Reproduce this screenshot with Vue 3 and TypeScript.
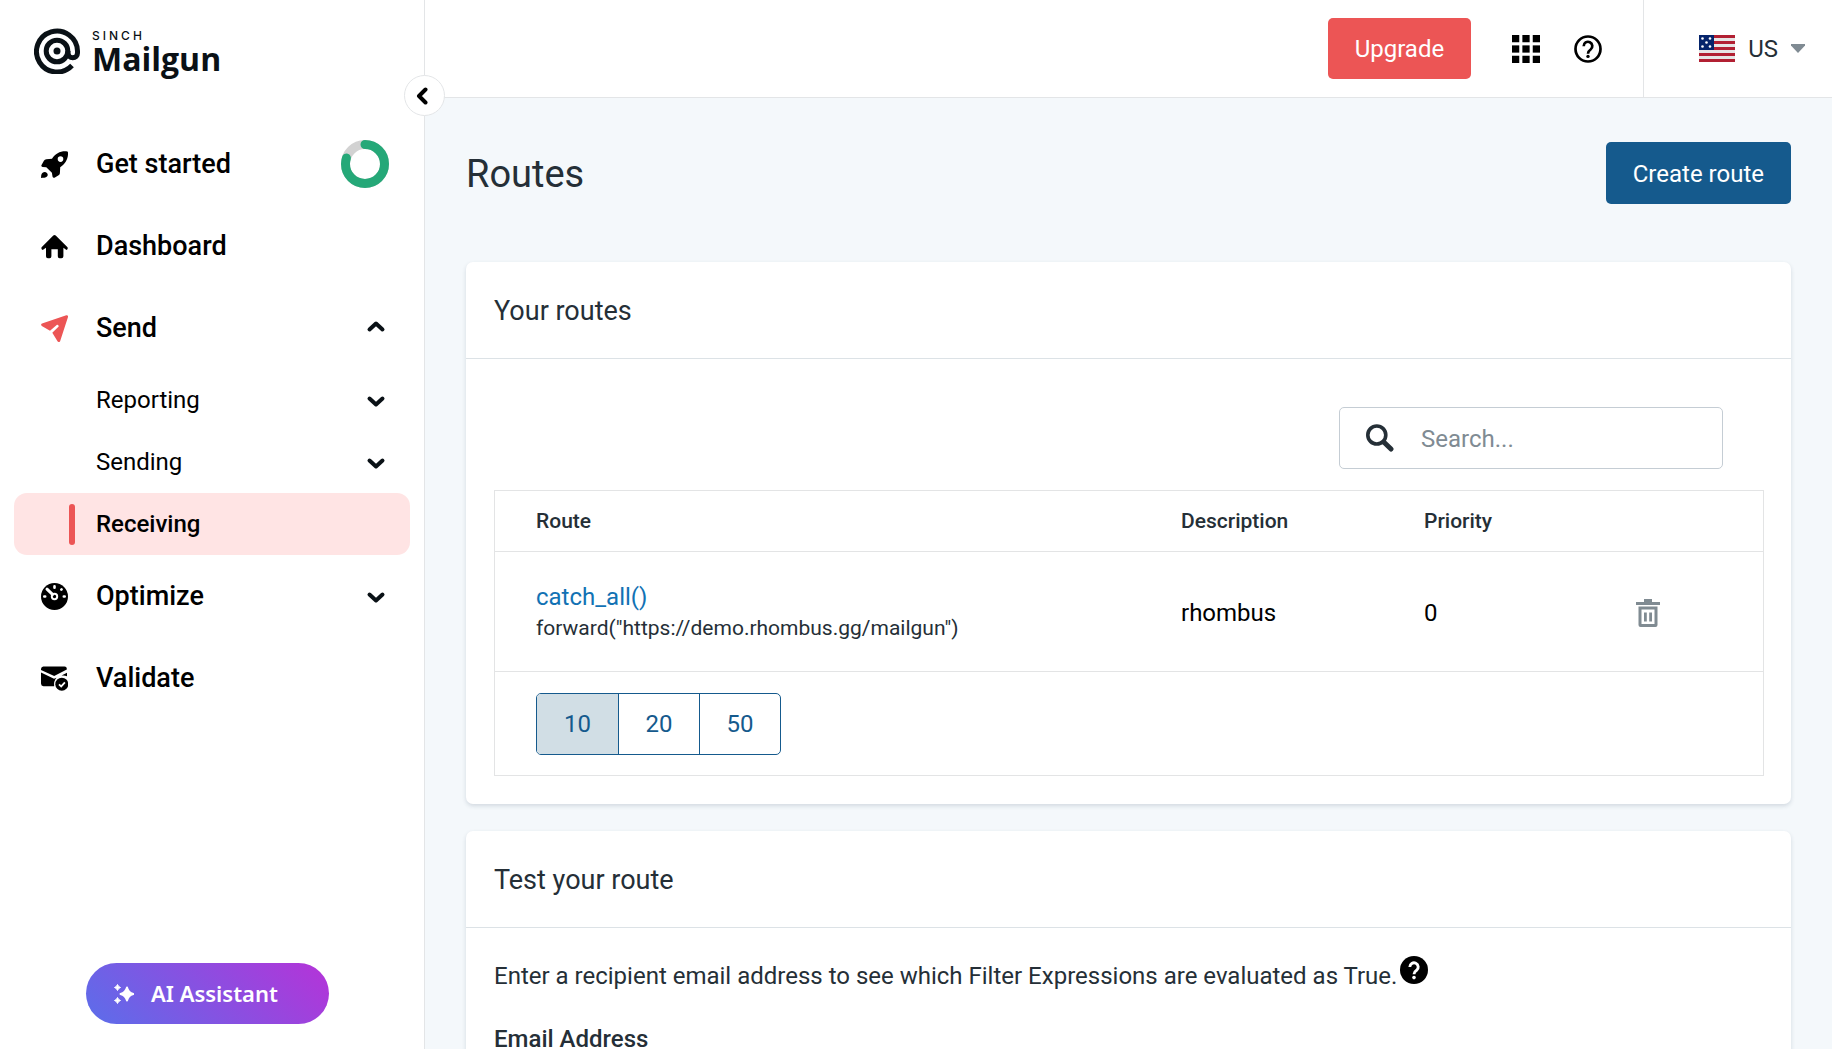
<script setup lang="ts">
import { ref } from 'vue'

type IconName = 'rocket' | 'home' | 'send' | 'gauge' | 'validate'
interface SubItem { label: string; active?: boolean }
interface NavItem {
  label: string
  icon: IconName
  progress?: number
  open?: boolean
  children?: SubItem[]
}
interface RouteRow { expression: string; action: string; description: string; priority: number }

const nav: NavItem[] = [
  { label: 'Get started', icon: 'rocket', progress: 80 },
  { label: 'Dashboard', icon: 'home' },
  {
    label: 'Send',
    icon: 'send',
    open: true,
    children: [{ label: 'Reporting' }, { label: 'Sending' }, { label: 'Receiving', active: true }],
  },
  { label: 'Optimize', icon: 'gauge', open: false },
  { label: 'Validate', icon: 'validate' },
]

const routes: RouteRow[] = [
  {
    expression: 'catch_all()',
    action: 'forward("https://demo.rhombus.gg/mailgun")',
    description: 'rhombus',
    priority: 0,
  },
]

const pageSizes = [10, 20, 50]
const pageSize = ref(10)
const search = ref('')
const email = ref('')
const gridCells = [0, 10, 20]
const flagStripes = [0, 6, 12, 18, 24]
</script>

<template>
  <div class="shell">
    <aside class="sidebar">
      <a href="#" class="logo">
        <svg class="logo-mark" viewBox="0 0 46 46" fill="none" stroke="#0a1116" stroke-width="5">
          <path d="M38 37.500A20.500 20.500 0 1 1 43.500 23v2a4.750 4.750 0 0 1-9.500 0v-2" />
          <circle cx="23" cy="23" r="10.800" />
          <circle cx="23" cy="23" r="3.500" fill="#0a1116" stroke="none" />
        </svg>
        <span class="logo-text">
          <span class="logo-over">SINCH</span>
          <span class="logo-name">Mailgun</span>
        </span>
      </a>

      <button class="collapse" type="button" aria-label="Collapse menu">
        <svg width="12" height="18" viewBox="0 0 12 18" fill="none" stroke="#000" stroke-width="4" stroke-linecap="round" stroke-linejoin="round">
          <path d="M9.500 2.500 3 9l6.500 6.500" />
        </svg>
      </button>

      <nav>
        <template v-for="item in nav" :key="item.label">
          <a href="#" class="item">
            <svg class="icon" viewBox="0 0 27 27">
              <g v-if="item.icon === 'rocket'" fill-rule="evenodd">
                <path d="M26.300.4C20-.4 14.500 2.300 11 7.800L5.300 8.300Q3.700 8.500 2.900 9.800L.4 14.300Q0 15.800 1.600 15.900L5.300 16.200 10.900 21.700 11.500 25.500Q12 27.300 13.500 26.700L17.600 24.200Q18.700 23.500 18.900 22.200L19.200 16.200C24.700 12.700 27.700 7 26.900 1Q26.800.5 26.300.4ZM19.500 5.300a2.800 2.800 0 1 1 0 5.600a2.800 2.800 0 1 1 0-5.600Z" />
                <path d="M.1 27C-.1 23.800.9 21.100 3.600 21.100 6.400 21.200 7.600 23.900 6 25.600 4.800 26.900 2.300 26.900.1 27Z" />
              </g>
              <path v-else-if="item.icon === 'home'" d="M12.300 2.500Q13.500 1.500 14.700 2.500L26.500 14.300Q27.300 16.200 25.500 16.900L22.400 14.700V23.300Q22.400 25.300 20.400 25.300H18.600Q16.800 25.300 16.800 23.300V16.200H10.400V23.300Q10.400 25.300 8.600 25.300H6.900Q5 25.300 5 23.300V14.700L1.700 16.900Q-.2 16.200.6 14.300Z" />
              <path v-else-if="item.icon === 'send'" fill="#ec5555" d="M1 8.500 25.300.2Q27.300 0 27 2L19.200 26Q18.200 28 16.500 26.300L11.300 17.800 17.700 11.500Q17.700 9.500 16 9.800L9 15.800.8 11Q-.7 9.500 1 8.500Z" />
              <g v-else-if="item.icon === 'gauge'">
                <circle cx="13.500" cy="13.500" r="13.500" />
                <g stroke="#fff" stroke-width="2.600" stroke-linecap="round">
                  <path d="M13.500 3.300v1.400M3.300 13.500h.9M22.800 13.500h.9M20.300 6.700l.3-.3" />
                  <path d="M6 6.200l5.500 5.200" stroke-width="3" />
                </g>
                <circle cx="13.500" cy="13.500" r="2.700" fill="none" stroke="#fff" stroke-width="2" />
              </g>
              <g v-else>
                <path d="M2.300 1.500h21.200Q26 1.700 25.800 4.500L13.200 10.900 0 5V4Q.2 1.700 2.300 1.500Z" />
                <path d="M0 7.500 13 13.700 15.500 12.700Q12.500 16 13.200 21.200H2.500Q0 21 0 18.500Z" />
                <path d="M20.500 10.600 26 7.700V11.200Q23.500 10.200 20.500 10.600Z" />
                <circle cx="20.800" cy="19.200" r="6.500" />
                <path d="m18 19.300 2.200 2.100 3.700-4" fill="none" stroke="#fff" stroke-width="1.800" />
              </g>
            </svg>
            <span class="label">{{ item.label }}</span>
            <svg v-if="item.progress" class="donut" viewBox="0 0 48 48" fill="none" stroke-width="9">
              <circle cx="24" cy="24" r="19.500" stroke="#d2d2d2" />
              <circle cx="24" cy="24" r="19.500" stroke="#25a878" stroke-linecap="round" pathLength="100" :stroke-dasharray="`${item.progress} 100`" transform="rotate(-90 24 24)" />
            </svg>
            <svg v-else-if="item.open !== undefined" class="chevron" :class="{ up: item.open }" viewBox="0 0 18 12">
              <path d="m2.500 4.500 6.500 6 6.500-6" />
            </svg>
          </a>
          <a v-for="sub in item.children" :key="sub.label" href="#" class="sub" :class="{ active: sub.active }">
            <span class="label">{{ sub.label }}</span>
            <svg v-if="!sub.active" class="chevron" viewBox="0 0 18 12">
              <path d="m2.500 4.500 6.500 6 6.500-6" />
            </svg>
          </a>
        </template>
      </nav>

      <button class="assistant" type="button">
        <svg width="20" height="20" viewBox="0 0 20 20" fill="#fff">
          <path d="M13 3.500Q14.200 8.600 19.300 10 14.200 11.400 13 16.500 11.600 11.400 6.500 10 11.600 8.600 13 3.500Z" stroke="#fff" stroke-width="2" stroke-linejoin="round" />
          <path d="M3.500.5Q4.200 2.800 6.500 3.500 4.200 4.200 3.500 6.500 2.800 4.200.5 3.500 2.800 2.800 3.500.5ZM3.500 13.500Q4.200 15.800 6.500 16.500 4.200 17.200 3.500 19.500 2.800 17.200.5 16.500 2.800 15.800 3.500 13.500Z" stroke="#fff" />
        </svg>
        <span>AI Assistant</span>
      </button>
    </aside>

    <div class="content">
      <header class="topbar">
        <button class="btn upgrade" type="button">Upgrade</button>
        <button class="icon-btn apps" type="button" aria-label="Apps">
          <svg width="28" height="28" viewBox="0 0 27 27">
            <template v-for="y in gridCells" :key="y">
              <rect v-for="x in gridCells" :key="x" :x="x" :y="y" width="7" height="7" />
            </template>
          </svg>
        </button>
        <button class="icon-btn help" type="button" aria-label="Help">
          <svg width="28" height="28" viewBox="0 0 28 28" fill="none" stroke="#000" stroke-width="2.700">
            <circle cx="14" cy="14" r="12.500" />
            <path d="M9.700 11.200a4.300 4.300 0 1 1 6.900 3.300Q14 16.300 14 18.700" />
            <circle cx="14" cy="21.400" r="1.700" fill="#000" stroke="none" />
          </svg>
        </button>
        <button class="region" type="button">
          <svg class="flag" width="36" height="27" viewBox="0 0 36 27">
            <rect width="36" height="27" rx="1" fill="#e6e6e6" />
            <rect v-for="y in flagStripes" :key="y" :y="y" width="36" height="3" fill="#b22033" />
            <rect width="15" height="15" fill="#05246b" />
            <g fill="#fff">
              <circle cx="3.500" cy="3.500" r="1.300" /><circle cx="11" cy="3.500" r="1.300" />
              <circle cx="7.500" cy="7.500" r="1.300" />
              <circle cx="3.500" cy="11.500" r="1.300" /><circle cx="11" cy="11.500" r="1.300" />
            </g>
          </svg>
          <span>US</span>
          <svg width="14" height="9" viewBox="0 0 14 9" fill="#808b93"><path d="M0 0h14v1.500L7 9 0 1.500Z" /></svg>
        </button>
      </header>

      <main>
        <div class="page-head">
          <h1>Routes</h1>
          <button class="btn create" type="button">Create route</button>
        </div>

        <section class="card">
          <h2>Your routes</h2>
          <div class="routes-body">
            <label class="search">
              <svg width="28" height="28" viewBox="0 0 28 28" fill="none" stroke="#252f37">
                <circle cx="10.800" cy="11" r="9" stroke-width="3.600" />
                <path d="m18 18.200 7 6.800" stroke-width="5" stroke-linecap="round" />
              </svg>
              <input v-model="search" type="text" placeholder="Search..." aria-label="Search" />
            </label>

            <div class="table-box">
              <table>
                <thead>
                  <tr>
                    <th>Route</th>
                    <th class="c-desc">Description</th>
                    <th class="c-prio">Priority</th>
                    <th class="c-act"></th>
                  </tr>
                </thead>
                <tbody>
                  <tr v-for="r in routes" :key="r.expression">
                    <td>
                      <a href="#" class="expr">{{ r.expression }}</a>
                      <div class="action">{{ r.action }}</div>
                    </td>
                    <td>{{ r.description }}</td>
                    <td>{{ r.priority }}</td>
                    <td>
                      <button class="icon-btn" type="button" aria-label="Delete route">
                        <svg width="24" height="28" viewBox="0 0 24 28" fill="#808b92">
                          <path d="M8 0h8v3h8v3H0V3h8ZM2.500 7.500h19V26q0 2-2 2h-15q-2 0-2-2ZM5.500 10.500v14.500h13V10.500Z" fill-rule="evenodd" />
                          <path d="M8 13.500h2.800v9H8ZM13.200 13.500H16v9h-2.800Z" />
                        </svg>
                      </button>
                    </td>
                  </tr>
                </tbody>
              </table>
              <div class="pager">
                <div class="sizes">
                  <button v-for="n in pageSizes" :key="n" type="button" :class="{ on: n === pageSize }" @click="pageSize = n">{{ n }}</button>
                </div>
              </div>
            </div>
          </div>
        </section>

        <section class="card">
          <h2>Test your route</h2>
          <div class="test-body">
            <p>
              <span>Enter a recipient email address to see which Filter Expressions are evaluated as True.</span>
              <svg width="28" height="28" viewBox="0 0 28 28">
                <circle cx="14" cy="14" r="14" />
                <path d="M9.800 11a4.200 4.200 0 1 1 6.800 3.300Q14 16 14 18.300" fill="none" stroke="#fff" stroke-width="2.900" />
                <circle cx="14" cy="21.600" r="1.800" fill="#fff" />
              </svg>
            </p>
            <label for="email">Email Address</label>
            <input id="email" v-model="email" type="email" />
          </div>
        </section>
      </main>
    </div>
  </div>
</template>

<style>
body {
  margin: 0;
  background: #f4f8fb;
}
</style>

<style scoped>
* {
  box-sizing: border-box;
}
.shell {
  display: flex;
  height: 100vh;
  overflow: hidden;
  font-family: Roboto, "Liberation Sans", sans-serif;
  font-size: 24px;
  line-height: 31px;
  color: #252f37;
}
button,
input {
  font: inherit;
}
button {
  border: 0;
  padding: 0;
  background: none;
  cursor: pointer;
}
a {
  text-decoration: none;
}
svg {
  display: block;
  flex: none;
}

/* Sidebar */
.sidebar {
  position: relative;
  z-index: 2;
  flex: none;
  display: flex;
  flex-direction: column;
  width: 425px;
  background: #fff;
  border-right: 1px solid #e3e5e7;
}
.logo {
  display: flex;
  gap: 12px;
  height: 123px;
  padding: 28px 0 0 34px;
  color: #0a1116;
}
.logo-mark {
  width: 46px;
  height: 46px;
}
.logo-text {
  display: flex;
  flex-direction: column;
}
.logo-over {
  font: 500 12px/15px Inter, sans-serif;
  letter-spacing: 3px;
}
.logo-name {
  font: 700 32px/32px "Open Sans", sans-serif;
}
.collapse {
  position: absolute;
  top: 75px;
  right: -21px;
  display: flex;
  align-items: center;
  justify-content: center;
  width: 41px;
  height: 41px;
  padding-right: 6px;
  background: #fff;
  border: 1px solid #e3e5e7;
  border-radius: 50%;
}
nav {
  flex: 1;
}
.item,
.sub {
  display: flex;
  align-items: center;
  color: #000;
}
.item {
  height: 82px;
  padding: 0 35px 0 41px;
  gap: 28px;
  font-size: 27px;
  font-weight: 500;
}
.label {
  flex: 1;
}
.icon {
  width: 27px;
  height: 27px;
}
.donut {
  width: 48px;
  height: 48px;
}
.chevron {
  width: 18px;
  height: 12px;
  margin-right: 4px;
  overflow: visible;
  fill: none;
  stroke: #0a1116;
  stroke-width: 4;
  stroke-linecap: round;
  stroke-linejoin: round;
}
.chevron.up {
  transform: rotate(180deg);
}
.sub {
  position: relative;
  height: 62px;
  margin: 0 14px;
  padding: 0 21px 0 82px;
  border-radius: 13px;
}
.sub.active {
  background: #ffe4e4;
  font-weight: 500;
}
.sub.active::before {
  content: "";
  position: absolute;
  left: 55px;
  width: 6px;
  height: 41px;
  border-radius: 3px;
  background: #ec5555;
}
.assistant {
  display: flex;
  align-items: center;
  gap: 17px;
  width: 243px;
  height: 61px;
  margin: 0 0 25px 86px;
  padding-left: 28px;
  border-radius: 31px;
  background: linear-gradient(45deg, #5b6eea, #b533d8);
  color: #fff;
  font: 600 22px/31px "Noto Sans", sans-serif;
}

/* Top bar */
.content {
  flex: 1;
  min-width: 0;
  display: flex;
  flex-direction: column;
}
.topbar {
  flex: none;
  display: flex;
  align-items: center;
  justify-content: flex-end;
  height: 98px;
  background: #fff;
  border-bottom: 1px solid #e3e5e7;
}
.btn {
  height: 62px;
  padding: 2px 27px 0;
  border-radius: 5px;
  color: #fff;
}
.upgrade {
  height: 61px;
  background: #ec5555;
}
.create {
  background: #155a8d;
}
.apps {
  margin-left: 41px;
}
.help {
  margin: 0 41px 0 34px;
}
.region {
  display: flex;
  align-items: center;
  align-self: stretch;
  gap: 13px;
  padding: 0 27px 0 55px;
  border-left: 1px solid #e3e5e7;
  color: #252f37;
}
.region span {
  padding-top: 2px;
}

/* Page */
main {
  flex: 1;
  min-height: 0;
  padding: 44px 41px 41px;
  overflow-y: auto;
  scrollbar-width: none;
  background: #f4f8fb;
}
.page-head {
  display: flex;
  align-items: center;
  justify-content: space-between;
  margin-bottom: 58px;
}
h1,
h2,
p {
  margin: 0;
  font-weight: 400;
}
h1 {
  padding-top: 2px;
  font-size: 38px;
  line-height: 48px;
}
.card {
  margin-bottom: 27px;
  background: #fff;
  border-radius: 7px;
  box-shadow: 0 2px 4px rgba(40, 60, 90, 0.16);
}
h2 {
  padding: 2px 28px 0;
  border-bottom: 1px solid #dce2e6;
  font-size: 27px;
  line-height: 94px;
}
.routes-body {
  display: flex;
  flex-direction: column;
  padding: 48px 27px 28px 28px;
}
.search {
  display: flex;
  align-items: center;
  align-self: flex-end;
  gap: 27px;
  width: 384px;
  height: 62px;
  margin: 0 41px 21px 0;
  padding: 0 26px;
  border: 1px solid #c5cdd4;
  border-radius: 5px;
}
.search input {
  flex: 1;
  min-width: 0;
  padding: 2px 0 0;
  border: 0;
  outline: 0;
  background: none;
}
.search input::placeholder {
  color: #808b93;
  opacity: 1;
}
.table-box {
  border: 1px solid #e3e4e5;
}
table {
  width: 100%;
  table-layout: fixed;
  border-collapse: separate;
  border-spacing: 0;
}
th,
td {
  padding: 0 0 0 41px;
  border-bottom: 1px solid #e3e4e5;
  text-align: left;
  vertical-align: middle;
}
th {
  height: 61px;
  font-size: 21px;
  font-weight: 500;
}
td {
  height: 120px;
  padding-top: 3px;
  color: #000;
}
td button {
  display: block;
}
.c-desc {
  width: 243px;
}
.c-prio {
  width: 212px;
}
.c-act {
  width: 168px;
}
.expr {
  color: #1272b4;
}
.action {
  font-size: 21px;
  color: #252f37;
}
.pager {
  display: flex;
  padding: 21px 41px 20px;
}
.sizes {
  display: flex;
  height: 62px;
  border: 1px solid #155a8d;
  border-radius: 5px;
  overflow: hidden;
}
.sizes button {
  width: 81px;
  color: #155a8d;
}
.sizes button + button {
  border-left: 1px solid #155a8d;
}
.sizes .on {
  background: #d1dee5;
}
.test-body {
  display: flex;
  flex-direction: column;
  padding: 28px;
}
.test-body p {
  display: flex;
  gap: 3px;
  margin-bottom: 32px;
}
.test-body p span {
  padding-top: 5px;
}
.test-body label {
  font-weight: 500;
}
.test-body input {
  height: 62px;
  margin-top: 10px;
  padding: 0 20px;
  border: 1px solid #c5cdd4;
  border-radius: 5px;
}
</style>
